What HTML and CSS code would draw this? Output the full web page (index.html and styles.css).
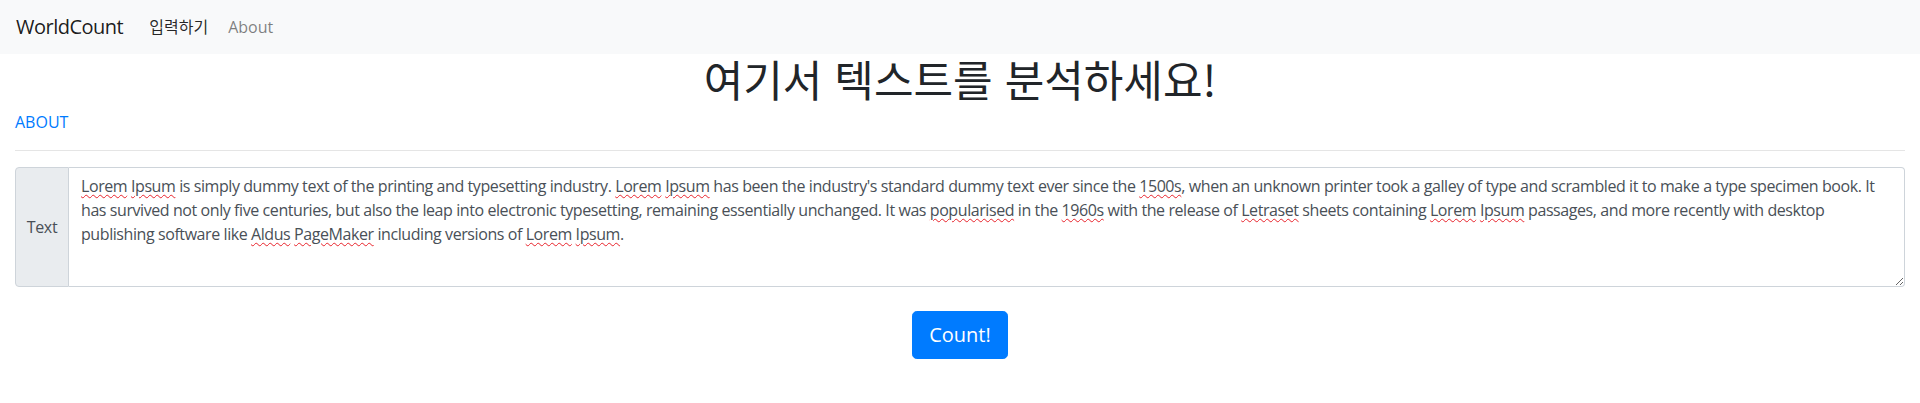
FILE: index.html
```html
<!DOCTYPE html>
<html lang="ko">
<head>
<meta charset="utf-8">
<title>WorldCount</title>
<link rel="stylesheet" href="styles.css">
</head>
<body>
<nav class="navbar">
  <a class="brand" href="#">WorldCount</a>
  <ul class="nav">
    <li><a class="nav-link active" href="#">입력하기</a></li>
    <li><a class="nav-link" href="#">About</a></li>
  </ul>
</nav>
<main class="container">
  <h1 class="title">여기서 텍스트를 분석하세요!</h1>
  <div class="about-row"><a class="about" href="#">ABOUT</a></div>
  <hr class="divider">
  <form class="count-form">
    <div class="input-group">
      <span class="prepend">Text</span>
      <div class="textbox" contenteditable="true" role="textbox" aria-multiline="true"><span class="sp">Lorem</span> <span class="sp">Ipsum</span> is simply dummy text of the printing and typesetting industry. <span class="sp">Lorem</span> <span class="sp">Ipsum</span> has been the industry's standard dummy text ever since the <span class="sp">1500s</span>, when an unknown printer took a galley of type and scrambled it to make a type specimen book. It<br>has survived not only five centuries, but also the leap into electronic typesetting, remaining essentially unchanged. It was <span class="sp">popularised</span> in the <span class="sp">1960s</span> with the release of <span class="sp">Letraset</span> sheets containing <span class="sp">Lorem</span> <span class="sp">Ipsum</span> passages, and more recently with desktop<br>publishing software like <span class="sp">Aldus</span> <span class="sp">PageMaker</span> including versions of <span class="sp">Lorem</span> <span class="sp">Ipsum</span>.</div>
    </div>
    <div class="actions">
      <button class="btn" type="button">Count!</button>
    </div>
  </form>
</main>
</body>
</html>
```
FILE: styles.css
```css
* { box-sizing: border-box; }

body {
  margin: 0;
  font-family: "Open Sans", "Noto Sans CJK KR", sans-serif;
  font-size: 16px;
  line-height: 1.5;
  color: #212529;
  background: #fff;
}

.navbar {
  display: flex;
  align-items: center;
  height: 54px;
  padding: 8px 16px;
  background: #f8f9fa;
}

.brand {
  font-size: 20px;
  line-height: 30px;
  letter-spacing: -0.5px;
  margin-right: 18px;
  color: rgba(0, 0, 0, 0.9);
  text-decoration: none;
}

.nav {
  display: flex;
  list-style: none;
  margin: 0;
  padding: 0;
}

.nav-link {
  display: block;
  padding: 8px;
  color: rgba(0, 0, 0, 0.5);
  text-decoration: none;
}

.nav-link.active {
  color: rgba(0, 0, 0, 0.85);
  padding-right: 12px;
}

.container {
  padding: 0 15px;
}

.title {
  margin: 0 0 8px;
  font-family: "Noto Sans CJK KR", sans-serif;
  font-size: 43px;
  font-weight: 400;
  line-height: 48px;
  text-align: center;
}

.about {
  color: #007bff;
  text-decoration: none;
}

.divider {
  margin: 16px 0;
  border: 0;
  border-top: 1px solid rgba(0, 0, 0, 0.1);
}

.input-group {
  display: flex;
  height: 120px;
}

.prepend {
  display: flex;
  align-items: center;
  justify-content: center;
  flex: 0 0 54px;
  background: #e9ecef;
  border: 1px solid #ced4da;
  border-radius: 4px 0 0 4px;
  color: #495057;
  letter-spacing: -0.3px;
}

.textbox {
  flex: 1;
  padding: 6px 12px;
  border: 1px solid #ced4da;
  border-left: 0;
  border-radius: 0 4px 4px 0;
  color: #495057;
  letter-spacing: -0.42px;
  white-space: nowrap;
  overflow: hidden;
  resize: vertical;
  outline: none;
}

.sp {
  text-decoration: underline wavy #e8232b;
  text-decoration-thickness: 1px;
  text-underline-offset: 2px;
}

.actions {
  display: flex;
  justify-content: center;
  margin-top: 24px;
}

.btn {
  font-family: inherit;
  font-size: 20px;
  line-height: 1.5;
  padding: 8px 16px;
  color: #fff;
  background: #007bff;
  border: 1px solid #007bff;
  border-radius: 4.8px;
}
```
